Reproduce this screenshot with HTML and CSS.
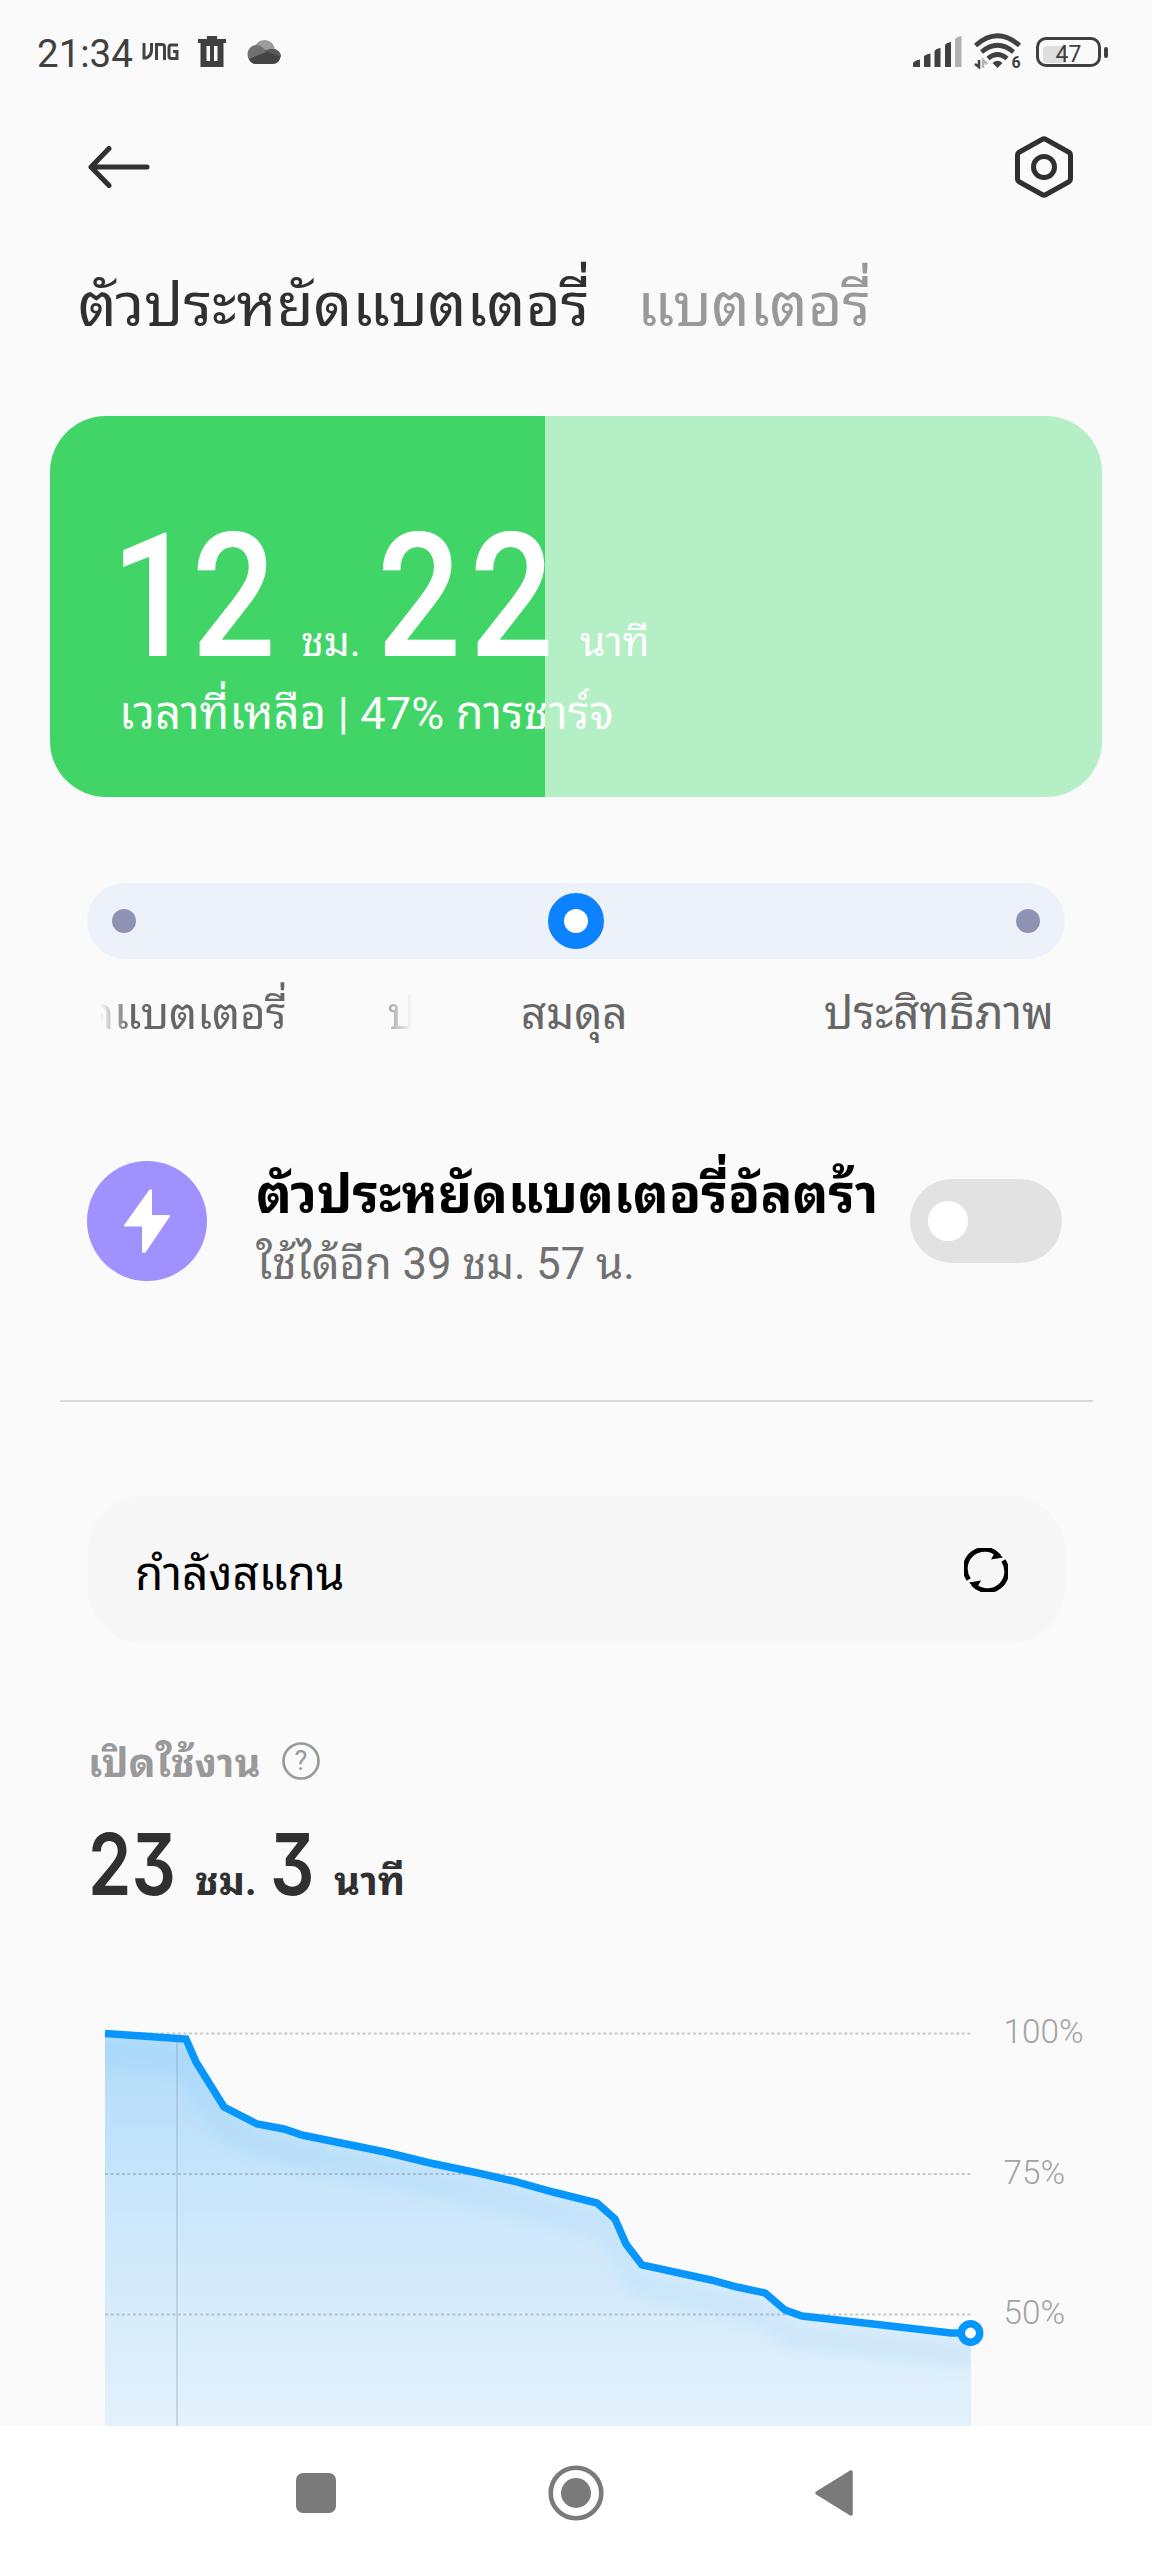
FILE: index.html
```html
<!DOCTYPE html>
<html lang="th">
<head>
<meta charset="utf-8">
<title>ตัวประหยัดแบตเตอรี่</title>
<link rel="stylesheet" href="styles.css">
</head>
<body>
<div class="screen">
  <header class="status">
    <div class="status-side">
      <span class="clock">21:34</span>
      <svg class="ic-vng" width="38" height="18" viewBox="0 0 38 18" fill="none" stroke="#444" stroke-width="3"><path d="M2 0V15H4Q9.500 13 9.500 7V0M14.500 17V1.500H20Q22.500 1.500 22.500 4V17M36 2H29.500Q27 2 27 4.500V13Q27 15.500 29.500 15.500H35V8.500H31"/></svg>
      <svg class="ic-trash" width="28" height="32" viewBox="0 0 28 32" fill="#404040"><path d="M9 0H19V3H28V7H25.500V31H2.500V7H0V3H9ZM8.500 10V25H12V10ZM16 10V25H19.500V10Z" fill-rule="evenodd"/></svg>
      <svg class="ic-cloud" width="34" height="24" viewBox="0 0 34 24"><circle cx="17.500" cy="10.500" r="10.500" fill="#9c9c9c"/><path d="M9 5Q14 5 17 9L26 14L17 24H9A8.500 9.500 0 0 1 9 5Z" fill="#707070"/><path d="M19 12Q21 9 26 9A7.500 7.500 0 0 1 26 24H9Q4 24 2 19Z" fill="#444"/><path d="M17 10.500Q21 9 25 9A8.500 7.500 0 0 1 34 17Z" fill="#595959"/></svg>
    </div>
    <div class="status-side">
      <svg width="49" height="32" viewBox="0 0 49 32" fill="#404040"><path d="M0 31V27Q2 24 7 23.500V31ZM11 31V20Q13 18 17.500 17.500V31ZM21.500 31V15Q23 12.500 27.500 12V31ZM32 31V9Q33.500 6.500 38 6V31Z"/><path d="M42 31V3Q44 .5 48.500 0V31Z" fill="#b0b0b0"/></svg>
      <svg class="ic-wifi" width="48" height="38" viewBox="0 0 48 38" fill="none" stroke="#404040" stroke-width="4.600"><path d="M1.500 12.500Q23.500-7 45.500 12.500"/><path d="M7.500 19Q23.500 5.500 39.500 19"/><path d="M14 25.500Q23.500 17.500 33 25.500"/><path d="M18.500 30Q23.500 25.500 28.500 30L23.500 35Z" fill="#404040" stroke="none"/><path d="M5 27V34L1 31" stroke-width="2.500"/><path d="M9 35V27L13 31" stroke="#b5b5b5" stroke-width="2.500"/><text x="37.500" y="35" class="wifi-gen">6</text></svg>
      <span class="battery"><span class="battery-body"><span class="battery-fill"></span><span class="battery-num">47</span></span><span class="battery-cap"></span></span>
    </div>
  </header>

  <nav class="toolbar">
    <svg width="62" height="42" viewBox="0 0 62 42" fill="none" stroke="#303030" stroke-width="5" stroke-linecap="round" stroke-linejoin="round"><path d="M59 21H3M21 2.500L3 21L21 39.500"/></svg>
    <svg width="58" height="62" viewBox="0 0 58 62" fill="none" stroke="#303030" stroke-width="5" stroke-linejoin="round"><path d="M27 3.500Q29 2.300 31 3.500L53.500 16Q55.500 17.200 55.500 19.500V42.500Q55.500 44.800 53.500 46L31 58.500Q29 59.700 27 58.500L4.500 46Q2.500 44.800 2.500 42.500V19.500Q2.500 17.200 4.500 16Z"/><circle cx="29" cy="31" r="10.500"/></svg>
  </nav>

  <div class="tabs"><span class="tab tab-on">ตัวประหยัดแบตเตอรี่</span><span class="tab">แบตเตอรี่</span></div>

  <section class="card">
    <div class="card-time"><span class="big big-h">12</span><span class="unit u1">ชม.</span><span class="big big-m">22</span><span class="unit u2">นาที</span></div>
    <div class="card-sub">เวลาที่เหลือ | 47% การชาร์จ</div>
  </section>

  <div class="slider"><i class="dot"></i><i class="thumb"></i><i class="dot"></i></div>
  <div class="modes">
    <div class="marquee"><span class="m1">ดแบตเตอรี่</span><span class="m2">ป</span></div>
    <span class="mode mode-mid">สมดุล</span>
    <span class="mode mode-end">ประสิทธิภาพ</span>
  </div>

  <section class="ultra">
    <svg width="120" height="120" viewBox="0 0 120 120"><circle cx="60" cy="60" r="60" fill="#9f92ff"/><path d="M63 29.500L38 64.500H56V90.500Q57 91 58 90.500L82 55H64V29.500Z" fill="#fff" stroke="#fff" stroke-width="2" stroke-linejoin="round"/></svg>
    <div class="ultra-text"><div class="ultra-title">ตัวประหยัดแบตเตอรี่อัลตร้า</div><div class="ultra-sub">ใช้ได้อีก 39 ชม. 57 น.</div></div>
    <span class="toggle"><i class="knob"></i></span>
  </section>

  <hr class="divider">

  <section class="scan">
    <span class="scan-text">กำลังสแกน</span>
    <svg width="44" height="44" viewBox="0 0 44 44" fill="none" stroke="#000" stroke-width="4.800"><path d="M4.700 31.500A19.200 19.200 0 0 1 35 8"/><path d="M39.300 12.500A19.200 19.200 0 0 1 9 36"/><path d="M33 4L39 9.500L27 11.500L30 6ZM11 40L5 34.500L17 32.500L14 38Z" fill="#000" stroke="none"/></svg>
  </section>

  <div class="usage-head"><span class="usage-label">เปิดใช้งาน</span>
    <svg width="38" height="38" viewBox="0 0 38 38"><circle cx="19" cy="19" r="17.500" fill="none" stroke="#999" stroke-width="2.700"/><text x="19" y="28" class="help">?</text></svg>
  </div>
  <div class="usage-time"><span class="mid mid-h">23</span><span class="unit-b b1">ชม.</span><span class="mid mid-m">3</span><span class="unit-b b2">นาที</span></div>

  <svg class="chart" width="1152" height="426" viewBox="0 2000 1152 426">
    <defs>
      <linearGradient id="area" x1="0" y1="2033" x2="0" y2="2426" gradientUnits="userSpaceOnUse"><stop offset="0" stop-color="#b0dbfa"/><stop offset=".5" stop-color="#cfe8fb"/><stop offset="1" stop-color="#e3f1fb"/></linearGradient>
      <clipPath id="under"><path d="M105 2033L186 2039L196 2062L224 2107L257 2124L284 2129L302 2135L385 2152L430 2163L478 2173L513 2181L553 2192L597 2203L615 2219L626 2244L642 2265L711 2280L737 2287L765 2293L785 2310L802 2316L873 2324L951 2333H971V2426H105Z"/></clipPath>
      <filter id="soft" x="-10%" y="-10%" width="120%" height="130%"><feGaussianBlur stdDeviation="8"/></filter>
    </defs>
    <g clip-path="url(#under)">
      <rect x="105" y="2033" width="866" height="393" fill="url(#area)"/>
      <path transform="translate(0 22)" d="M85 2033L186 2039L196 2062L224 2107L257 2124L302 2135L385 2152L478 2173L553 2192L597 2203L615 2219L626 2244L642 2265L711 2280L765 2293L785 2310L802 2316L873 2324L951 2333H991" fill="none" stroke="#2b9cf0" stroke-opacity=".1" stroke-width="14" filter="url(#soft)"/>
    </g>
    <path d="M105 2033.500H971M105 2174H971M105 2314.500H971" stroke="#7a8790" stroke-opacity=".42" stroke-width="2" stroke-dasharray="3 2.600"/>
    <path d="M177 2040V2426" stroke="#7f9cb0" stroke-opacity=".5" stroke-width="1.200"/>
    <path d="M105 2033.500L186 2039L196 2062L224 2107L257 2124L284 2129L302 2135L385 2152L430 2163L478 2173L513 2181L553 2192L597 2203L615 2219L626 2244L642 2265L711 2280L737 2287L765 2293L785 2310L802 2316L873 2324L951 2333H971" fill="none" stroke="#0797fc" stroke-width="7.500"/>
    <circle cx="970.500" cy="2333" r="9.200" fill="#fff" stroke="#0797fc" stroke-width="7.500"/>
    <text x="1003.500" y="2043" class="axis">100%</text>
    <text x="1003.500" y="2183.500" class="axis">75%</text>
    <text x="1003.500" y="2324" class="axis">50%</text>
  </svg>

  <footer class="navbar">
    <svg width="56" height="56" viewBox="0 0 56 56"><rect x="8" y="8" width="40" height="40" rx="7" fill="#7a7a7a"/></svg>
    <svg width="56" height="56" viewBox="0 0 56 56"><circle cx="28" cy="28" r="25.300" fill="none" stroke="#7a7a7a" stroke-width="4.600"/><circle cx="28" cy="28" r="15" fill="#7a7a7a"/></svg>
    <svg width="56" height="56" viewBox="0 0 56 56"><path d="M9 28L43 7V49Z" fill="#7a7a7a" stroke="#7a7a7a" stroke-width="3.500" stroke-linejoin="round"/></svg>
  </footer>
</div>
</body>
</html>
```
FILE: styles.css
```css
* { box-sizing: border-box; }
body { margin: 0; background: #fafafa; font-family: Roboto, "Noto Sans Thai Looped", Loma, "Noto Sans Thai", "Noto Sans", sans-serif; color: #303030; }
svg { display: block; flex: none; }
span, div { white-space: nowrap; }
i { display: block; }
.screen { width: 1152px; height: 2560px; overflow: hidden; display: flex; flex-direction: column; background: #fafafa; }
.screen > * { flex: none; }

.status { height: 104px; padding: 0 44px 0 37px; display: flex; align-items: center; justify-content: space-between; }
.status-side { display: flex; align-items: center; }
.clock { font-size: 38.5px; line-height: 44px; color: #404040; margin-top: 3px; }
.ic-vng { margin: 0 0 0 9px; }
.ic-trash { margin: 0 21px 0 18px; }
.ic-wifi { margin: 0 14px 0 12px; }
.wifi-gen { font: 700 16px Roboto, sans-serif; fill: #404040; stroke: none; }
.battery { display: flex; align-items: center; gap: 3px; }
.battery-body { width: 65px; height: 30px; border: 3px solid #404040; border-radius: 10px; padding: 4px; display: grid; align-items: center; }
.battery-fill { grid-area: 1 / 1; width: 23px; height: 17px; border-radius: 4px 0 0 4px; background: #dedede; }
.battery-num { grid-area: 1 / 1; text-align: center; font-size: 23px; line-height: 18px; padding-top: 2px; color: #404040; }
.battery-cap { width: 4px; height: 11px; border-radius: 2px; background: #404040; }

.toolbar { height: 125px; padding: 0 79px 0 88px; display: flex; align-items: center; justify-content: space-between; }

.tabs { height: 187px; padding: 37px 0 0 78px; display: flex; gap: 48px; font-size: 60.5px; line-height: 80px; color: #999; }
.tab-on { color: #303030; }
.tab + .tab { font-size: 59.5px; }

.card { width: 1052px; height: 381px; margin-left: 50px; border-radius: 56px; padding: 95px 0 0 61px; background: linear-gradient(90deg, #41d568 495px, #b4efc6 495px); color: #fff; }
.card-time { height: 168px; display: flex; align-items: baseline; line-height: 172px; }
.big { display: block; font-size: 172px; font-weight: 500; transform: scaleX(.86); transform-origin: left; }
.big-h { width: 180px; letter-spacing: -4px; }
.big-m { width: 190px; letter-spacing: 10px; }
.unit { font-size: 41px; padding-left: 10px; }
.u1 { width: 86px; }
.u2 { padding-left: 13px; }
.card-sub { font-size: 45px; line-height: 70px; margin: 0 0 0 8px; letter-spacing: .2px; }

.slider { width: 978px; height: 76px; margin: 86px 0 0 87px; padding: 0 25px; border-radius: 38px; background: #edf1f9; display: flex; align-items: center; justify-content: space-between; }
.dot { width: 24px; height: 24px; border-radius: 50%; background: #8f93b3; }
.thumb { width: 56px; height: 56px; border-radius: 50%; border: 16px solid #0c82ff; background: #fff; }

.modes { height: 152px; padding: 20px 98px 0 100px; display: flex; font-size: 44px; line-height: 70px; color: #666; }
.marquee { width: 316px; height: 90px; display: flex; justify-content: space-between; overflow: hidden; -webkit-mask-image: linear-gradient(90deg, transparent, #000 30px, #000 270px, transparent 312px); mask-image: linear-gradient(90deg, transparent, #000 30px, #000 270px, transparent 312px); }
.m1 { margin-left: -14px; }
.mode-mid { margin-left: 105px; }
.mode-end { margin-left: auto; font-size: 45.5px; }

.ultra { height: 220px; padding: 0 90px 0 87px; display: flex; align-items: center; }
.ultra-text { margin-left: 49px; padding-top: 18px; flex: 1; }
.ultra-title { font-size: 53px; font-weight: 700; line-height: 70px; color: #000; }
.ultra-sub { font-size: 43.500px; line-height: 70px; color: #707070; }
.toggle { width: 152px; height: 84px; border-radius: 42px; background: #e2e2e2; padding: 0 18px; display: flex; align-items: center; }
.knob { width: 40px; height: 40px; border-radius: 50%; background: #fff; }

.divider { width: 1033px; height: 2px; margin: 69px 0 0 60px; border: 0; background: #d9d9d9; }

.scan { width: 977px; height: 148px; margin: 94px 0 0 88px; padding: 0 57px 0 47px; border-radius: 56px; background: #f7f7f7; display: flex; align-items: center; justify-content: space-between; color: #000; font-size: 46px; }
.scan-text { padding-bottom: 3px; }
.usage-head { height: 76px; margin: 79px 0 0 88px; display: flex; align-items: center; gap: 21px; font-size: 40px; font-weight: 700; color: #999; }
.usage-label { padding-bottom: 4px; }
.help { font: 400 27px Roboto, sans-serif; fill: #999; text-anchor: middle; }
.usage-time { height: 201px; padding: 16px 0 0 88px; display: flex; align-items: baseline; line-height: 100px; color: #303030; }
.mid { display: block; font-size: 85px; font-weight: 600; font-family: Inter, sans-serif; font-feature-settings: "cv09"; transform: scaleX(.82); transform-origin: left; }
.mid-h { width: 103px; }
.mid-m { width: 55px; }
.unit-b { font-size: 40px; font-weight: 700; }
.b1 { width: 79px; padding-left: 4px; }
.b2 { padding-left: 9px; }
.axis { font: 300 33.3px Roboto, sans-serif; fill: #a3a3a3; }

.navbar { height: 134px; padding: 0 288px; background: #fff; display: flex; align-items: center; justify-content: space-between; }
```
